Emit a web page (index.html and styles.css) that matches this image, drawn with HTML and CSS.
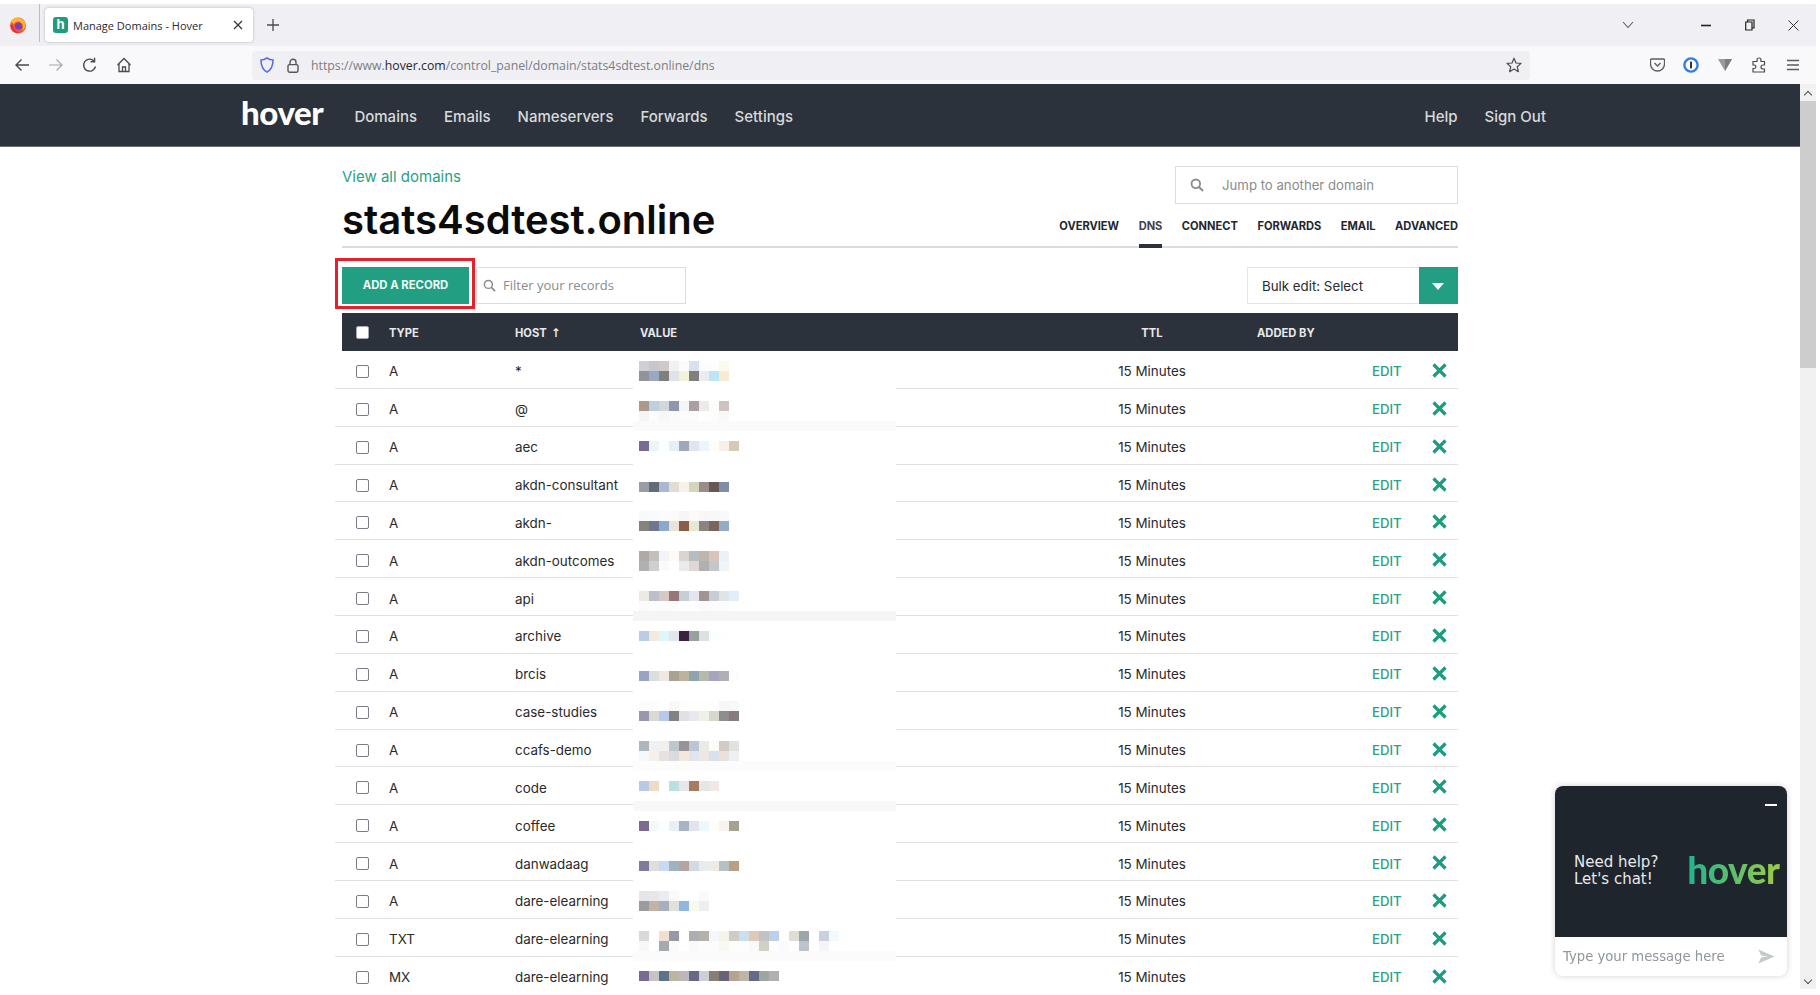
FILE: index.html
```html
<!DOCTYPE html>
<html>
<head>
    <title>Manage Domains - Hover</title>
    <link rel="stylesheet" href="styles.css">
</head>
<body>
    <!-- Browser chrome -->
    <div class="tabstrip">
        <svg class="ff-logo" width="18" height="18" viewBox="0 0 18 18">
            <circle cx="9" cy="9.5" r="8" fill="#f0563a"/>
            <path d="M2 6 C4 1 12 0 16 6 C17 9 16 13 13 15 C15 11 14 8 11 6 C9 5 6 6 5 8 C4 7 3 7 2 6Z" fill="#ffb52e"/>
            <circle cx="9.5" cy="10" r="3.6" fill="#7b3fb3"/>
            <path d="M1.5 9 C2 14 6 17.5 11 17 C7 16 4 13 4 9Z" fill="#e22850"/>
        </svg>
        <div class="tab-divider"></div>
        <div class="tab">
            <span class="favicon">h</span>
            <span class="tab-title">Manage Domains - Hover</span>
            <svg class="tab-close" width="10" height="10" viewBox="0 0 10 10"><path d="M1 1 L9 9 M9 1 L1 9" stroke="#3a3a3e" stroke-width="1.3"/></svg>
        </div>
        <svg class="new-tab" width="14" height="14" viewBox="0 0 14 14"><path d="M7 1 V13 M1 7 H13" stroke="#4a4a4f" stroke-width="1.3"/></svg>
        <svg class="tab-list" width="12" height="8" viewBox="0 0 12 8"><path d="M1 1 L6 6.5 L11 1" fill="none" stroke="#5b5b60" stroke-width="1.1"/></svg>
        <svg class="win-min" width="10" height="3" viewBox="0 0 10 3"><path d="M0 1.5 H10" stroke="#222" stroke-width="1.6"/></svg>
        <svg class="win-max" width="10" height="12" viewBox="0 0 10 12"><path d="M0.7 3 H7 V11 H0.7Z M2.6 3 V1 H9 V9 H7" fill="none" stroke="#222" stroke-width="1.2"/></svg>
        <svg class="win-close" width="11" height="11" viewBox="0 0 11 11"><path d="M0.5 0.5 L10.5 10.5 M10.5 0.5 L0.5 10.5" stroke="#333" stroke-width="1"/></svg>
    </div>

    <div class="toolbar">
        <span class="tool"><svg width="16" height="14" viewBox="0 0 16 14"><path d="M15 7 H2 M7.5 1.5 L2 7 L7.5 12.5" fill="none" stroke="#4a4a4f" stroke-width="1.4"/></svg></span>
        <span class="tool"><svg width="16" height="14" viewBox="0 0 16 14"><path d="M1 7 H14 M8.5 1.5 L14 7 L8.5 12.5" fill="none" stroke="#a9a9ad" stroke-width="1.2"/></svg></span>
        <span class="tool"><svg width="16" height="16" viewBox="0 0 16 16"><path d="M13.5 9.5 A6 6 0 1 1 12 4 M12.6 0.8 V4.8 H8.6" fill="none" stroke="#4a4a4f" stroke-width="1.4"/></svg></span>
        <span class="tool"><svg width="16" height="16" viewBox="0 0 16 16"><path d="M1.5 8 L8 1.5 L14.5 8 M3 6.8 V14.5 H13 V6.8 M6.5 14.5 V10 H9.5 V14.5" fill="none" stroke="#4a4a4f" stroke-width="1.3"/></svg></span>
        <div class="urlbar">
            <svg class="shield" width="14" height="16" viewBox="0 0 14 16"><path d="M7 1 C9 2.4 11 3 13 3 C13 9 11 13 7 15 C3 13 1 9 1 3 C3 3 5 2.4 7 1Z" fill="none" stroke="#5a6ee0" stroke-width="1.6"/></svg>
            <svg class="lock" width="12" height="15" viewBox="0 0 12 15"><path d="M3 7 V4.3 A3 3 0 0 1 9 4.3 V7" fill="none" stroke="#55555a" stroke-width="1.4"/><rect x="1" y="6.6" width="10" height="7.6" rx="1.4" fill="none" stroke="#55555a" stroke-width="1.4"/></svg>
            <span class="url">https://www.<b>hover.com</b>/control_panel/domain/stats4sdtest.online/dns</span>
            <svg class="star" width="16" height="16" viewBox="0 0 16 16"><path d="M8 1.2 L10 6 L15 6.4 L11.2 9.7 L12.4 14.7 L8 12 L3.6 14.7 L4.8 9.7 L1 6.4 L6 6Z" fill="none" stroke="#4a4a4f" stroke-width="1.2" stroke-linejoin="round"/></svg>
        </div>
        <span class="tool tool-first"><svg width="15" height="14" viewBox="0 0 15 14"><path d="M1.5 1 H13.5 A1 1 0 0 1 14.5 2 V6 A7 7 0 0 1 0.5 6 V2 A1 1 0 0 1 1.5 1Z M4.5 5 L7.5 8 L10.5 5" fill="none" stroke="#5b5b66" stroke-width="1.3"/></svg></span>
        <span class="tool"><svg width="16" height="16" viewBox="0 0 16 16"><circle cx="8" cy="8" r="6.6" fill="#fff" stroke="#2f7fe0" stroke-width="2.4"/><rect x="7" y="4.6" width="2" height="6.8" fill="#333"/></svg></span>
        <span class="tool"><svg width="14" height="14" viewBox="0 0 14 14"><path d="M0 1 H14 L7 13Z" fill="#9a9a9a"/><path d="M7 1 H14 L7 13Z" fill="#7d7d7d"/></svg></span>
        <span class="tool"><svg width="14" height="16" viewBox="0 0 14 16"><path d="M1 4.5 H5 V3 A2 2 0 0 1 9 3 V4.5 H12.5 V8 H11 A2 2 0 0 0 11 12 H12.5 V15 H1 V11.5 H2.5 A1.8 1.8 0 0 0 2.5 8 H1Z" fill="none" stroke="#4a4a4f" stroke-width="1.2"/></svg></span>
        <span class="tool"><svg width="14" height="12" viewBox="0 0 14 12"><path d="M1 1.5 H13 M1 6 H13 M1 10.5 H13" stroke="#5b5b60" stroke-width="1.4"/></svg></span>
    </div>

    <div class="viewport">
        <div class="page">
            <!-- Hover site nav -->
            <div class="navbar">
                <a class="logo">hover</a>
                <a>Domains</a>
                <a>Emails</a>
                <a>Nameservers</a>
                <a>Forwards</a>
                <a>Settings</a>
                <a class="nav-right">Help</a>
                <a>Sign Out</a>
            </div>

            <div class="content">
                <div class="domain-head">
                    <div class="head-left">
                        <a class="back-link">View all domains</a>
                        <h1>stats4sdtest.online</h1>
                    </div>
                    <div class="head-right">
                        <div class="jump">
                            <svg width="14" height="14" viewBox="0 0 14 14"><circle cx="5.8" cy="5.8" r="4.3" fill="none" stroke="#8c8c8c" stroke-width="1.8"/><path d="M9 9 L13 13" stroke="#8c8c8c" stroke-width="2"/></svg>
                            <span>Jump to another domain</span>
                        </div>
                        <div class="subnav">
                            <a>OVERVIEW</a>
                            <a class="active">DNS</a>
                            <a>CONNECT</a>
                            <a>FORWARDS</a>
                            <a>EMAIL</a>
                            <a>ADVANCED</a>
                        </div>
                    </div>
                </div>

                <div class="actions">
                    <button class="add-btn">ADD A RECORD<span class="highlight"></span></button>
                    <div class="filter">
                        <svg width="13" height="13" viewBox="0 0 14 14"><circle cx="5.8" cy="5.8" r="4.3" fill="none" stroke="#8c8c8c" stroke-width="1.6"/><path d="M9 9 L13 13" stroke="#8c8c8c" stroke-width="1.8"/></svg>
                        <span>Filter your records</span>
                    </div>
                    <div class="bulk">
                        <span class="bulk-label">Bulk edit: Select</span>
                        <span class="bulk-arrow"></span>
                    </div>
                </div>

                <div class="table">
                    <div class="row head">
                        <div class="c-check"><span class="box on"></span></div>
                        <div>TYPE</div>
                        <div>HOST <span class="sort">&#8593;</span></div>
                        <div class="c-value">VALUE</div>
                        <div></div>
                        <div class="c-ttl">TTL</div>
                        <div class="c-added">ADDED BY</div>
                        <div></div>
                        <div></div>
                    </div>
                    <div id="rows"></div>
                </div>
            </div>
        </div>

        <div class="scrollbar">
            <span class="sb-up"></span>
            <div class="sb-thumb"></div>
            <span class="sb-down"></span>
        </div>
    </div>

    <!-- Chat widget -->
    <div class="chat">
        <div class="chat-top">
            <span class="chat-min"></span>
            <div class="chat-text">Need help?<br>Let's chat!</div>
            <div class="chat-logo">hover</div>
        </div>
        <div class="chat-input">
            <span>Type your message here</span>
            <svg width="17" height="15" viewBox="0 0 17 15"><path d="M0.5 0.5 L16.5 7.5 L0.5 14.5 L3 8.6 L10 7.5 L3 6.4Z" fill="#c4c9cc"/></svg>
        </div>
    </div>

    <script src="script.js"></script>
</body>
</html>
```

FILE: styles.css
```css
* { box-sizing: border-box; }
html, body { height: 100%; }
body {
    margin: 0;
    padding-right: 4px;
    overflow: hidden;
    font-family: Inter, "Liberation Sans", sans-serif;
    background: #fff;
    color: #2b323b;
}
a { text-decoration: none; }

/* browser chrome */
.tabstrip {
    height: 42px;
    margin-top: 4px;
    background: #f0f0f4;
    display: flex;
    align-items: center;
}
.ff-logo { margin-left: 9px; }
.tab-divider { width: 1px; height: 38px; background: #bdbdc0; margin-left: 12px; margin-top: -4px; }
.tab {
    width: 208px;
    height: 34px;
    margin-left: 5px;
    background: #fff;
    border-radius: 4px;
    box-shadow: 0 0 3px rgba(0,0,0,0.25);
    display: flex;
    align-items: center;
    padding-left: 8px;
}
.favicon {
    width: 15px;
    height: 16px;
    border-radius: 3px;
    background: #1f9c80;
    color: #fff;
    font-size: 13px;
    font-weight: 700;
    line-height: 15px;
    text-align: center;
}
.tab-title { font-size: 11px; margin-left: 5px; color: #2a2a2e; flex: 1; font-family: "Open Sans", sans-serif; }
.tab-close { margin-right: 10px; }
.new-tab { margin-left: 13px; }
.tab-list { margin-left: auto; }
.win-min { margin-left: 67px; }
.win-max { margin-left: 34px; }
.win-close { margin-left: 33px; margin-right: 17px; }

.toolbar {
    height: 38px;
    background: #f9f9fb;
    display: flex;
    align-items: center;
    padding-left: 5px;
}
.tool { width: 34px; display: flex; justify-content: center; align-items: center; flex: none; }
.tool-first { margin-left: 110px; }
.urlbar {
    width: 1278px;
    height: 29px;
    margin-left: 111px;
    background: #f0f0f4;
    border-radius: 4px;
    display: flex;
    align-items: center;
    padding-left: 8px;
    flex: none;
}
.lock { margin-left: 13px; }
.url { font-size: 12.3px; color: #7c7c84; margin-left: 12px; font-family: "Open Sans", sans-serif; flex: 1; }
.url b { font-weight: 400; color: #26262a; }
.star { margin-right: 8px; }

/* page */
.viewport { display: flex; height: 905px; }
.page { flex: 1; min-width: 0; overflow: hidden; }
.navbar {
    height: 63px;
    background: #2b323b;
    border-bottom: 1px solid #6c7076;
    display: flex;
    align-items: center;
    padding: 0 254px 0 241px;
    gap: 27px;
}
.navbar a { color: #d7dadc; font-size: 15px; font-weight: 500; padding-top: 3px; }
.navbar .logo {
    color: #fff;
    font-family: Lato, sans-serif;
    font-size: 33px;
    font-weight: 900;
    letter-spacing: -0.4px;
    margin-right: 4px;
    margin-top: -6px;
    padding-top: 0;
    line-height: 1;
}
.navbar .nav-right { margin-left: auto; }

.content { width: 1116px; margin-left: 342px; }
.domain-head {
    height: 101px;
    display: flex;
    justify-content: space-between;
    border-bottom: 2px solid #dcdcdc;
    padding-top: 19px;
}
.head-left { display: flex; flex-direction: column; }
.back-link { color: #2ba086; font-size: 15px; line-height: 20px; margin-top: 1px; }
h1 {
    margin: 8px 0 0;
    font-size: 40px;
    font-weight: 600;
    line-height: 50px;
    color: #0b0b0b;
}
.head-right { display: flex; flex-direction: column; align-items: flex-end; justify-content: space-between; }
.jump {
    width: 283px;
    height: 38px;
    border: 1px solid #dcdcdc;
    display: flex;
    align-items: center;
    padding-left: 14px;
    color: #8b8b8b;
    font-size: 13.2px;
}
.jump span { margin-left: 18px; }
.subnav { display: flex; gap: 19.5px; margin-bottom: -2px; }
.subnav a {
    font-size: 11.1px;
    font-weight: 700;
    color: #23282f;
    height: 33px;
    padding-top: 4px;
}
.subnav a.active { border-bottom: 4px solid #2b323b; color: #3d444c; }

.actions { display: flex; margin-top: 19px; height: 37px; }
.add-btn {
    width: 127px;
    height: 37px;
    border: none;
    background: #229f83;
    color: #eef8f5;
    font: 700 11.3px Inter, sans-serif;
    position: relative;
    padding: 0 0 2px;
}
.highlight {
    position: absolute;
    top: -9px;
    right: -6px;
    bottom: -5px;
    left: -7px;
    border: 3px solid #e4202c;
}
.filter {
    width: 210px;
    margin-left: 7px;
    border: 1px solid #dcdcdc;
    display: flex;
    align-items: center;
    padding-left: 6px;
    color: #8b8b8b;
    font-size: 13px;
}
.filter span { margin-left: 7px; padding-bottom: 2px; font-family: "Open Sans", sans-serif; }
.bulk {
    width: 211px;
    margin-left: auto;
    border: 1px solid #e4e4e4;
    display: flex;
    align-items: center;
    padding-left: 14px;
    font-size: 13.3px;
    color: #2a2a2a;
}
.bulk-label { flex: 1; }
.bulk-arrow {
    width: 39px;
    height: 37px;
    margin: -1px -1px -1px 0;
    background: #229f83;
    position: relative;
}
.bulk-arrow::after {
    content: "";
    position: absolute;
    left: 13px;
    top: 16px;
    border: 6.5px solid transparent;
    border-top: 7px solid #fff;
    border-bottom: 0;
}

/* records table */
.table { margin-top: 9px; }
.row {
    display: grid;
    grid-template-columns: 47px 126px 118px 263px 156px 198px 122px 52px 34px;
    grid-template-rows: 37.86px;
    height: 37.86px;
    font-size: 13.4px;
    color: #2a2a2a;
}
.row > div { display: flex; align-items: center; border-bottom: 1px solid #e1e1e1; min-width: 0; padding-top: 4px; }
.row .c-mosaic { border-bottom: none; padding: 0; flex-direction: column; align-items: flex-start; }
.row.head {
    grid-template-rows: 38px;
    height: 38px;
    background: #2b323b;
    color: #e8e9ea;
    font-size: 11.2px;
    font-weight: 700;
}
.row.head > div { border-bottom: none; padding-top: 1px; }
.row.head .c-value { padding-left: 7px; }
.sort { margin-left: 4px; font-size: 12px; font-weight: 700; font-family: "DejaVu Sans", sans-serif; }
.c-check { justify-content: center; margin-left: -7px; }
.row .c-ttl { justify-content: center; padding-left: 2px; }
.c-added { padding-left: 7px; }
.row .c-edit { color: #2ba086; font-size: 13.2px; font-weight: 500; }
.row .c-del { padding: 2px 0 0 8px; }
.box {
    width: 13px;
    height: 13px;
    border: 1.6px solid #7c7c88;
    border-radius: 2px;
    background: #fff;
}
.box.on { border-color: #a9a9b3; }
.mosaic { display: grid; grid-auto-columns: 10px; grid-auto-rows: 10px; grid-auto-flow: column; margin-left: 6px; flex: none; }
.mosaic i { display: block; }
.band { width: 263px; height: 10px; flex: none; }

/* scrollbar */
.scrollbar { width: 16px; background: #f1f1f1; display: flex; flex-direction: column; align-items: center; }
.sb-up, .sb-down {
    width: 6px;
    height: 6px;
    margin: 8px 0 0;
    border-left: 1.5px solid #505050;
    border-top: 1.5px solid #505050;
    transform: rotate(45deg);
    flex: none;
}
.sb-down { margin: auto 0 6px; transform: rotate(225deg); }
.sb-thumb { width: 16px; height: 267px; background: #cdcdcd; margin-top: 3px; }

/* chat */
.chat {
    position: fixed;
    left: 1555px;
    top: 786px;
    width: 232px;
    height: 190px;
    border-radius: 8px;
    overflow: hidden;
    background: #fff;
    box-shadow: 0 0 6px rgba(0,0,0,0.18);
}
.chat-top { height: 151px; background: #1f252c; position: relative; display: flex; align-items: center; padding-left: 19px; }
.chat-min { position: absolute; right: 10px; top: 18px; width: 12px; height: 2px; background: #fff; }
.chat-text { color: #e8e9ea; font-family: "DejaVu Sans", sans-serif; font-size: 15px; line-height: 17px; margin-top: 19px; }
.chat-logo {
    margin-left: 29px;
    margin-top: 15px;
    font-family: Lato, sans-serif;
    font-size: 37px;
    font-weight: 900;
    letter-spacing: -0.5px;
    background: linear-gradient(90deg, #22b38e, #9ccb4a);
    -webkit-background-clip: text;
    background-clip: text;
    color: transparent;
}
.chat-input {
    height: 39px;
    display: flex;
    align-items: center;
    justify-content: space-between;
    padding: 0 12px 0 8px;
    color: #8f969c;
    font-family: "DejaVu Sans", sans-serif;
    font-size: 13.2px;
}
```

FILE: script.js
```js
// records: type, host, top offset of the blurred block, its rows of colours,
// then optionally the faint band left under it [colour, gap]
const records = [
    ['A', '*', 10, [
        'cfd0d4 c6c7cb cfcac7 f0f1f1 fbfcfc d8e2ed fbfcfe fdfefa fbfbec',
        '909498 96aac3 7f7f7f e0e2e6 f3f2d9 7f7f7d eaecef bde5f4 f5ecd3']],
    ['A', '@', 12, [
        'ab998b bcd0e0 d2d8da 8e96b0 f3f5f6 ab9fa3 ecebe7 fdfdfd cdc4c2',
        'f5f5f5 fcfcfc f7f7f7 f9fafb fcfcfc fafbfc fdfefe fdfdfc f8f8f7'], ['fafafa', 0]],
    ['A', 'aec', 14, [
        '786a90 ecf4fa fbfdfe e6eff6 9ca9bc e1e4ea ebf6fc fefdf8 f5f1ea d6c9b5']],
    ['A', 'akdn-consultant', 17, [
        '999ca4 646b78 a9b9cf e2dcd5 f6f2ea d4d6bb 998d8a 645755 7f8da6']],
    ['A', 'akdn-', 9, [
        'f9f9f9 f9fafb fafbfd fdfbfa f6f6f6 fdfbf8 f7f7f7 f8f8f9 f9f9fb',
        '86827e 6e778f 8aa9cb ebe2d8 8b5d49 e7e8d2 8b8580 7a665d 95adc4']],
    ['A', 'akdn-outcomes', 11, [
        'aeaaa8 c3bfbb f1f4f8 fcfbf8 d8d5d2 b8bcc0 bdb5ae d7c5b9 ebf1f8',
        'b1b1b1 cdd0d0 fbfafa ffffff e8ebeb dfd6d6 b2afb0 c3c6ca f1f4f7']],
    ['A', 'api', 13, [
        'ebeae5 bcbfc9 d6c9c3 967677 c6ced6 e3e6ef 9f9592 c8ccd6 dfe4e7 e2edfa',
        'fbfbfb fbfcfd fbfbfb fbfdfd fefefe fefefe fbfbfb fdfcfb fbfcfc ffffff'], ['f5f5f5', 0]],
    ['A', 'archive', 15, [
        'bbcde4 f2eadc ddf6fa e3e6ec 3a2340 9aa09e dde2e1 fbfdfe fefefc']],
    ['A', 'brcis', 17, [
        '9aa3c2 d9dfdc f0e8e1 a9a293 bdb29e 8fa3ad b4baae a3a6bd b2aeb6 fbfdfd']],
    ['A', 'case-studies', 9, [
        'fbfbfb fcfcfc ffffff f9f8f5 fdfdfc fefefb fefefc fefefe f7f7f7 f7f8f8',
        '9a96ac dcd9d4 b4cae8 7f8280 e1e1e3 e8e9ee edf1ea d9d7cc 8e8d8f 857c81']],
    ['A', 'ccafs-demo', 11, [
        'adb5bf eff1f0 f1f0ed bec6cd 989398 bbc5d6 e9ebe6 fbfbf7 d1cbc3 e1e1dd',
        'f5f9fc f6f0ec e6e2e2 dadbde f4e8dc e1e4ee ede6e3 d7e1ee e9e1da edf0f3'], ['fcfcfc', 0]],
    ['A', 'code', 14, [
        'b7cae5 f0dac5 ffffff bcdfe2 e7e7ea a67c60 e6e6e4 f1e8e4'], ['f8f8f8', 10]],
    ['A', 'coffee', 16, [
        '786a90 f4fafc fdfefe e8f0f6 a8b4c4 e1e4ea ebf8fc fefdf8 f7f2ec a9a190']],
    ['A', 'danwadaag', 18, [
        '7f7b9d dfdedc c6dbf3 9eb3bf b5a4a4 d3d9e3 e6eeec ecece4 b9c0c3 b9a084']],
    ['A', 'dare-elearning', 10, [
        'e6e6ea e7e7ea eaecf1 fafaf8 ffffff ffffff fafafa',
        '9b9b9f c2b3a5 a9b0bd e0e0dc 90b6e2 f6fbec eeeeee']],
    ['TXT', 'dare-elearning', 12, [
        'd9d8db ffffff efe0d0 979aa4 ffffff aeaeae b4b3a9 f5f8fb f6f4e6 cfcbc5 cddfeb ddcbb9 c0c2c6 bcd0ea ffffff e0ddd3 9ba6ab ffffff cbd0dd f3fafd',
        'f8f8f8 ffffff a6aab0 fafbfd ffffff f9f9f9 fcfcfa fcfcfa f9f8f5 fdfdfb fdfdfc f9f9f9 d2cfc3 fefefe fafafa ffffff bec3cb ffffff f4f5f8 ffffff'], ['fbfbfb', 0]],
    ['MX', 'dare-elearning', 14, [
        '786a90 c6c3c5 5d7389 bcb5a0 bbb7bd 646a85 ccd0d6 887e73 66637a b6a48f bfb5a7 646a88 9ba5a3 b0b0b0']]
];

function mosaicHtml(rows, top, band) {
    let cells = '';
    rows.forEach((line, r) => {
        line.split(' ').forEach((hex, c) => {
            cells += `<i style="background:#${hex};grid-row:${r + 1};grid-column:${c + 1}"></i>`;
        });
    });
    let html = `<div class="mosaic" style="margin-top:${top}px">${cells}</div>`;
    if (band) {
        html += `<div class="band" style="background:#${band[0]};margin-top:${band[1]}px"></div>`;
    }
    return html;
}

const deleteIcon = `<svg width="15" height="15" viewBox="0 0 15 15"><path d="M1.5 1.5 L13.5 13.5 M13.5 1.5 L1.5 13.5" stroke="#1f9c80" stroke-width="3.2"/></svg>`;

document.getElementById('rows').innerHTML = records.map(([type, host, top, rows, band]) => `
    <div class="row">
        <div class="c-check"><span class="box"></span></div>
        <div>${type}</div>
        <div>${host}</div>
        <div class="c-mosaic">${mosaicHtml(rows, top, band)}</div>
        <div></div>
        <div class="c-ttl">15 Minutes</div>
        <div class="c-added"></div>
        <div class="c-edit">EDIT</div>
        <div class="c-del">${deleteIcon}</div>
    </div>`).join('');
```
